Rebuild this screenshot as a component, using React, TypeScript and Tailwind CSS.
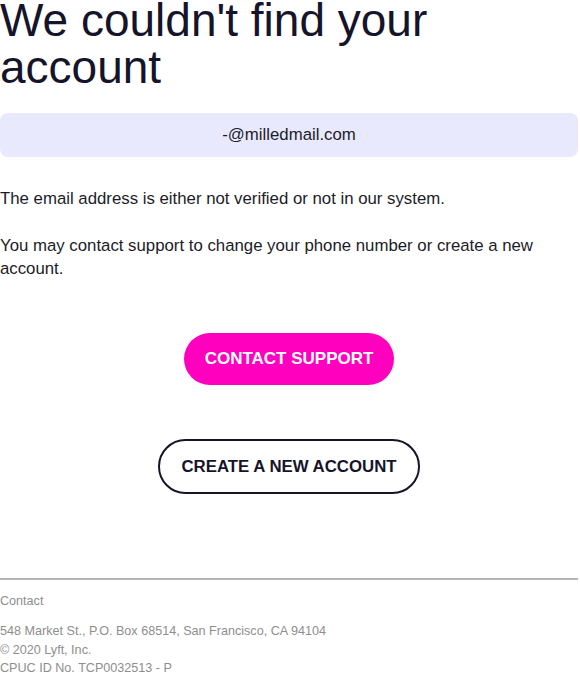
export default function App() {
  return (
    <div className="w-[578px] bg-white font-['Liberation_Sans',Arial,sans-serif] text-[#1c1c28]">
      <h1 className="-mt-[3px] text-[46px] leading-[47px] font-normal text-[#15142a]">
        We couldn&apos;t find your account
      </h1>

      <div className="mt-[22px] flex h-[44px] items-center justify-center rounded-lg bg-[#e9e9fd] text-[16.8px]">
        -@milledmail.com
      </div>

      <div className="mt-[30px] text-[16.8px] leading-[23px] text-[#1c1c28]">
        <p>The email address is either not verified or not in our system.</p>
        <p className="mt-[24px]">
          You may contact support to change your phone number or create a new account.
        </p>
      </div>

      <div className="mt-[53px] flex flex-col items-center">
        <button className="h-[52px] w-[210px] rounded-full bg-[#ff00bf] text-[17px] font-bold text-white">
          CONTACT SUPPORT
        </button>
        <button className="mt-[54px] h-[55px] w-[262px] rounded-full border-2 border-[#15142a] text-[16.8px] font-bold text-[#15142a]">
          CREATE A NEW ACCOUNT
        </button>
      </div>

      <footer className="mt-[84px] border-t-2 border-[#b5b5b5] pt-[12px] text-[12.6px] text-[#8e8e8e]">
        <p className="leading-[19px]">Contact</p>
        <div className="mt-[11px] leading-[18.5px]">
          <p>548 Market St., P.O. Box 68514, San Francisco, CA 94104</p>
          <p>© 2020 Lyft, Inc.</p>
          <p>CPUC ID No. TCP0032513 - P</p>
        </div>
      </footer>
    </div>
  );
}
